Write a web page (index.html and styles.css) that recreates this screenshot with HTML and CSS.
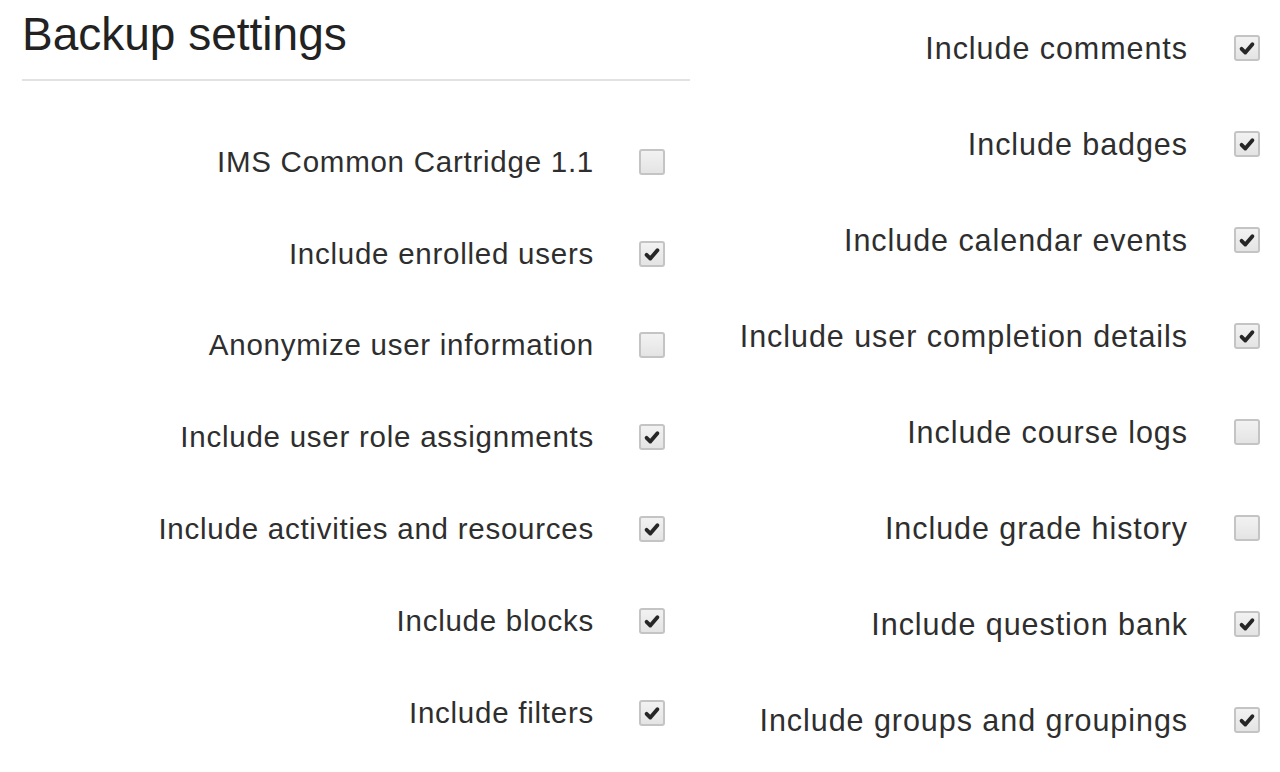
FILE: index.html
```html
<!DOCTYPE html>
<html>
<head>
<meta charset="utf-8">
<link rel="stylesheet" href="styles.css">
</head>
<body>
<div class="page">
  <section class="col left">
    <h2 class="title">Backup settings</h2>
    <div class="rows rows-left">
      <div class="row"><span class="label">IMS Common Cartridge 1.1</span><span class="cb"></span></div>
      <div class="row"><span class="label">Include enrolled users</span><span class="cb checked"><svg viewBox="0 0 24 24"><path d="M5.5 13 L10 17.5 L18.5 7.5"/></svg></span></div>
      <div class="row"><span class="label">Anonymize user information</span><span class="cb"></span></div>
      <div class="row"><span class="label">Include user role assignments</span><span class="cb checked"><svg viewBox="0 0 24 24"><path d="M5.5 13 L10 17.5 L18.5 7.5"/></svg></span></div>
      <div class="row"><span class="label">Include activities and resources</span><span class="cb checked"><svg viewBox="0 0 24 24"><path d="M5.5 13 L10 17.5 L18.5 7.5"/></svg></span></div>
      <div class="row"><span class="label">Include blocks</span><span class="cb checked"><svg viewBox="0 0 24 24"><path d="M5.5 13 L10 17.5 L18.5 7.5"/></svg></span></div>
      <div class="row"><span class="label">Include filters</span><span class="cb checked"><svg viewBox="0 0 24 24"><path d="M5.5 13 L10 17.5 L18.5 7.5"/></svg></span></div>
    </div>
  </section>
  <section class="col right">
    <div class="rows rows-right">
      <div class="row"><span class="label">Include comments</span><span class="cb checked"><svg viewBox="0 0 24 24"><path d="M5.5 13 L10 17.5 L18.5 7.5"/></svg></span></div>
      <div class="row"><span class="label">Include badges</span><span class="cb checked"><svg viewBox="0 0 24 24"><path d="M5.5 13 L10 17.5 L18.5 7.5"/></svg></span></div>
      <div class="row"><span class="label">Include calendar events</span><span class="cb checked"><svg viewBox="0 0 24 24"><path d="M5.5 13 L10 17.5 L18.5 7.5"/></svg></span></div>
      <div class="row"><span class="label">Include user completion details</span><span class="cb checked"><svg viewBox="0 0 24 24"><path d="M5.5 13 L10 17.5 L18.5 7.5"/></svg></span></div>
      <div class="row"><span class="label">Include course logs</span><span class="cb"></span></div>
      <div class="row"><span class="label">Include grade history</span><span class="cb"></span></div>
      <div class="row"><span class="label">Include question bank</span><span class="cb checked"><svg viewBox="0 0 24 24"><path d="M5.5 13 L10 17.5 L18.5 7.5"/></svg></span></div>
      <div class="row"><span class="label">Include groups and groupings</span><span class="cb checked"><svg viewBox="0 0 24 24"><path d="M5.5 13 L10 17.5 L18.5 7.5"/></svg></span></div>
    </div>
  </section>
</div>
</body>
</html>
```

FILE: styles.css
```css
html, body {
  margin: 0;
  padding: 0;
  background: #ffffff;
}
body {
  font-family: "Liberation Sans", Arial, sans-serif;
  color: #2b2b2b;
}
.page {
  display: flex;
  width: 1280px;
  height: 772px;
  overflow: hidden;
}
.col.left {
  width: 668px;
  padding-left: 22px;
}
.col.right {
  flex: 1;
}
.title {
  margin: 6px 0 0 0;
  font-size: 46px;
  line-height: 56px;
  font-weight: normal;
  color: #222;
  padding-bottom: 17px;
  border-bottom: 2px solid #e2e2e2;
}
.rows-left {
  margin-top: 35px;
}
.row {
  display: flex;
  align-items: center;
  justify-content: flex-end;
}
.rows-left .row {
  height: 91.8px;
  padding-right: 25px;
}
.rows-right .row {
  height: 96px;
  padding-right: 20px;
}
.label {
  white-space: nowrap;
  color: #2e2e2e;
}
.rows-left .label {
  font-size: 29.5px;
  letter-spacing: 0.75px;
  margin-right: 45px;
}
.rows-right .label {
  font-size: 30.5px;
  letter-spacing: 0.95px;
  margin-right: 46px;
}
.cb {
  width: 22px;
  height: 22px;
  border: 2px solid #c4c4c4;
  border-radius: 3px;
  background: linear-gradient(#f2f2f2, #e4e4e4);
  display: flex;
  align-items: center;
  justify-content: center;
  flex-shrink: 0;
}
.cb svg {
  width: 20px;
  height: 20px;
}
.cb svg path {
  fill: none;
  stroke: #262626;
  stroke-width: 4.6;
  stroke-linecap: round;
  stroke-linejoin: round;
}
```
